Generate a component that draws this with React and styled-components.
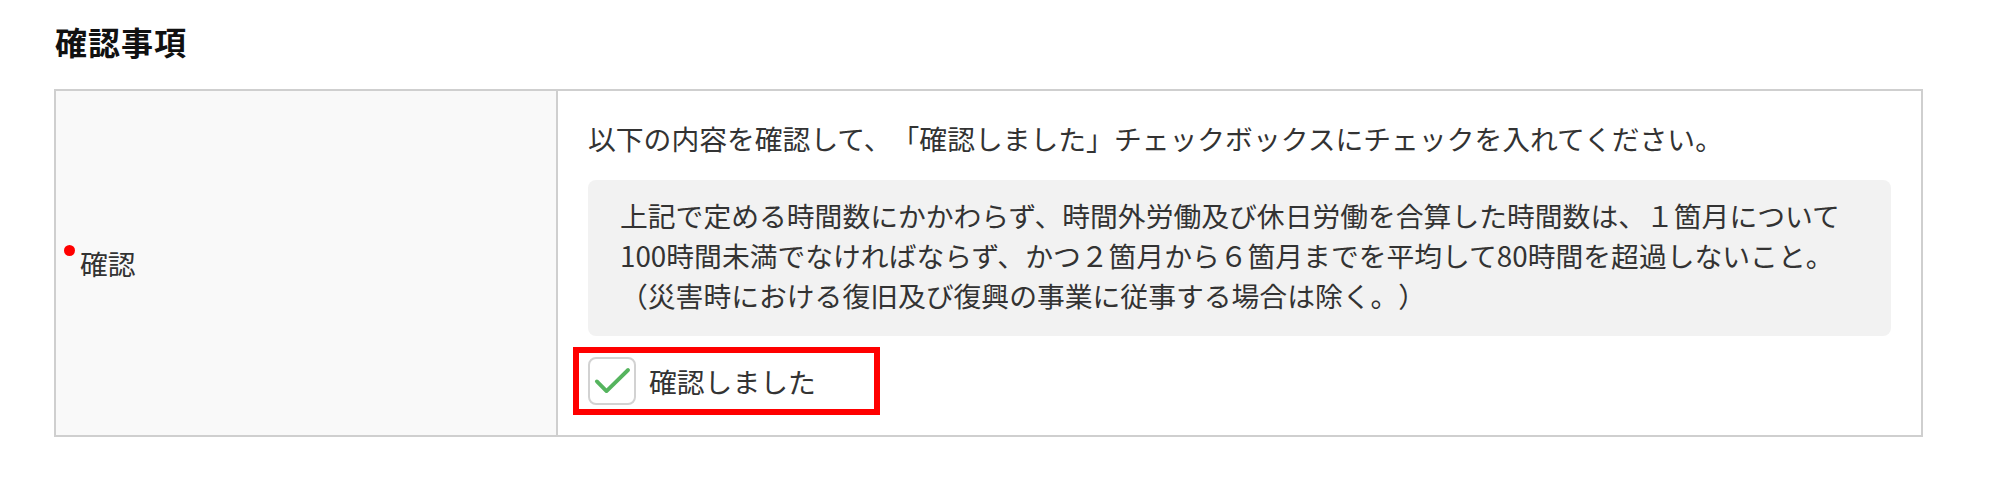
import React, { useState } from 'react';
import styled, { createGlobalStyle } from 'styled-components';

const GlobalStyle = createGlobalStyle`
  html, body {
    margin: 0;
    padding: 0;
    background: #fff;
  }
  body {
    font-family: "Noto Sans CJK JP", "Noto Sans", sans-serif;
    color: #333;
    text-spacing-trim: space-all;
  }
`;

const Page = styled.div`
  padding: 0 70px 0 54px;
`;

const SectionTitle = styled.h2`
  margin: 18px 0 25px 1px;
  font-size: 32px;
  line-height: 46px;
  font-weight: 700;
  color: #111;
  letter-spacing: 1px;
`;

const FormTable = styled.div`
  display: grid;
  grid-template-columns: 502px 1fr;
  border: 2px solid #cfcfcf;
`;

const LabelCell = styled.div`
  display: flex;
  align-items: center;
  padding: 0 24px;
  background: #f9f9f9;
  border-right: 2px solid #cfcfcf;
`;

const LabelText = styled.span`
  position: relative;
  font-size: 27.8px;
  line-height: 40px;
  color: #333;

  ${({ required }) =>
    required &&
    `
    &::before {
      content: '';
      position: absolute;
      left: -16px;
      top: 2px;
      width: 11px;
      height: 11px;
      border-radius: 50%;
      background: #f00;
    }
  `}
`;

const ValueCell = styled.div`
  padding: 27px 30px 20px 30px;
`;

const Lead = styled.p`
  margin: 0;
  font-size: 27.8px;
  line-height: 40px;
  color: #333;
`;

const NoticeBox = styled.div`
  margin-top: 22px;
  padding: 15px 32px 21px 32px;
  background: #f2f2f2;
  border-radius: 8px;
  font-size: 27.8px;
  line-height: 40px;
  color: #333;
`;

const CheckRow = styled.div`
  margin-top: 11px;
  margin-left: -15px;
`;

const CheckLabel = styled.label`
  display: inline-flex;
  align-items: center;
  gap: 13px;
  padding: 4px 58px 4px 9px;
  border: 6px solid ${({ highlight }) => (highlight ? '#f00' : 'transparent')};
  cursor: pointer;
  font-size: 27.8px;
  line-height: 40px;
  color: #333;
`;

const CheckBox = styled.span`
  display: inline-flex;
  align-items: center;
  justify-content: center;
  width: 48px;
  height: 48px;
  box-sizing: border-box;
  border: 2px solid #d2d2d2;
  border-radius: 8px;
  background: #fff;
`;

const CheckMark = () => (
  <svg width="48" height="48" viewBox="0 0 48 48">
    <path
      d="M7.5 24.5 L18 35 L41.5 12"
      fill="none"
      stroke="#55b45e"
      strokeWidth="4.2"
      strokeLinecap="round"
      strokeLinejoin="round"
    />
  </svg>
);

const App = () => {
  const [checked, setChecked] = useState(true);

  return (
    <Page>
      <GlobalStyle />
      <SectionTitle>確認事項</SectionTitle>
      <FormTable>
        <LabelCell>
          <LabelText required>確認</LabelText>
        </LabelCell>
        <ValueCell>
          <Lead>以下の内容を確認して、「確認しました」チェックボックスにチェックを入れてください。</Lead>
          <NoticeBox>
            上記で定める時間数にかかわらず、時間外労働及び休日労働を合算した時間数は、１箇月について
            <br />
            100時間未満でなければならず、かつ２箇月から６箇月までを平均して80時間を超過しないこと。
            <br />
            （災害時における復旧及び復興の事業に従事する場合は除く。）
          </NoticeBox>
          <CheckRow>
            <CheckLabel highlight onClick={() => setChecked(!checked)}>
              <CheckBox>{checked && <CheckMark />}</CheckBox>
              確認しました
            </CheckLabel>
          </CheckRow>
        </ValueCell>
      </FormTable>
    </Page>
  );
};

export default App;
